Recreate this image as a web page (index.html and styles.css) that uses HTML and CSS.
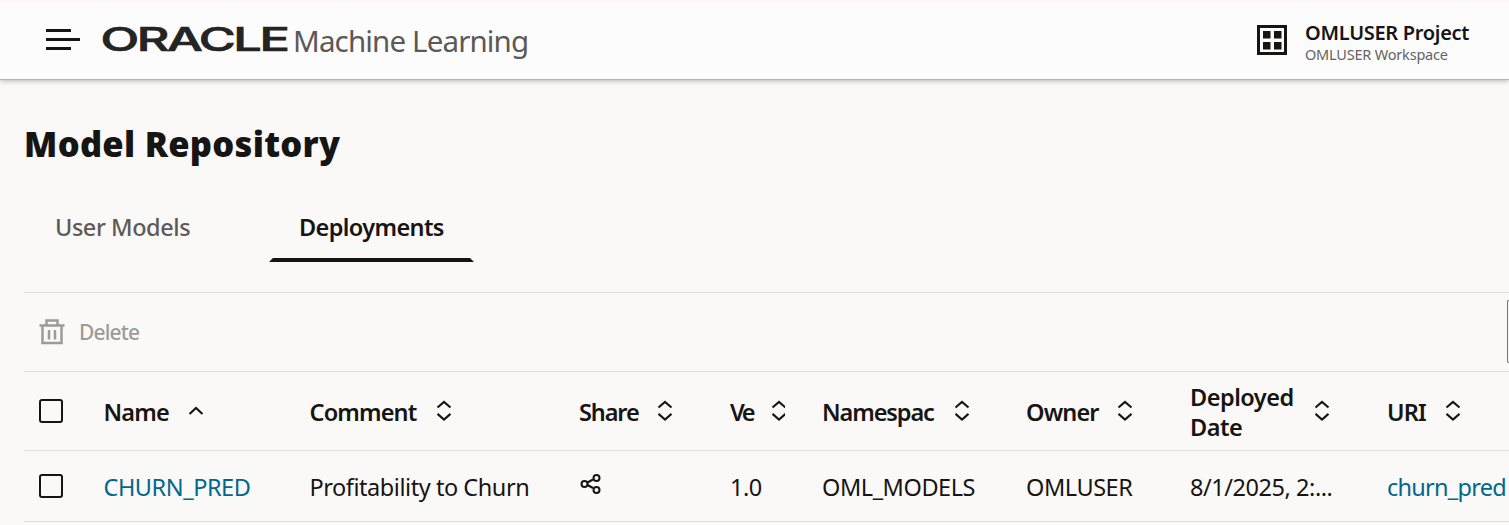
FILE: index.html
```html
<!DOCTYPE html>
<html lang="en">
<head>
<meta charset="utf-8">
<title>Model Repository</title>
<link rel="stylesheet" href="styles.css">
</head>
<body>
<svg class="defs" aria-hidden="true">
  <symbol id="sort" viewBox="0 0 16 24"><path d="M1.500 8.500 8 2.900l6.500 5.600M1.500 14.900 8 20.500l6.500-5.600"/></symbol>
  <symbol id="sort-up" viewBox="0 0 16 24"><path d="M1.500 15 8 9l6.500 6"/></symbol>
</svg>
<header class="topbar">
  <svg class="menu" viewBox="0 0 34 22"><path d="M0 1.500h25M0 10.500h34M0 19.500h25"/></svg>
  <svg class="wordmark" viewBox="0 0 186 26"><text x="-1.500" y="24.400" textLength="187" lengthAdjust="spacingAndGlyphs">ORACLE</text></svg>
  <span class="product">Machine Learning</span>
  <div class="project">
    <svg class="grid-icon" viewBox="0 0 30 30"><path class="frame" d="M1.500 1.500h27v27h-27z"/><path d="M6 6h7.500v7.500H6zM17 6h7.500v7.500H17zM6 17h7.500v7.500H6zM17 17h7.500v7.500H17z"/></svg>
    <div class="project-text">
      <div class="project-name">OMLUSER Project</div>
      <div class="workspace">OMLUSER Workspace</div>
    </div>
  </div>
</header>
<main>
  <h1>Model Repository</h1>
  <nav class="tabs">
    <a class="tab tab-models"><span>User Models</span></a>
    <a class="tab tab-deploy active"><span>Deployments</span></a>
  </nav>
  <section class="panel">
    <div class="toolbar">
      <button class="delete" disabled>
        <svg class="trash" viewBox="0 0 26 26"><path d="M0.500 6.500h25M3.500 6.500v17.500h19V6.500M7.500 6V1.500h11V6M10 11v9.500M16 11v9.500"/></svg>
        <span>Delete</span>
      </button>
      <div class="search"></div>
    </div>
    <div class="row head">
      <div class="check"><i class="box"></i></div>
      <div class="th name"><span>Name</span><svg><use href="#sort-up"/></svg></div>
      <div class="th comment"><span>Comment</span><svg><use href="#sort"/></svg></div>
      <div class="th shared"><span>Share</span><svg><use href="#sort"/></svg></div>
      <div class="th version"><span>Ve</span><svg><use href="#sort"/></svg></div>
      <div class="th namespace"><span>Namespac</span><svg><use href="#sort"/></svg></div>
      <div class="th owner"><span>Owner</span><svg><use href="#sort"/></svg></div>
      <div class="th date"><span>Deployed<br>Date</span><svg><use href="#sort"/></svg></div>
      <div class="th uri"><span>URI</span><svg><use href="#sort"/></svg></div>
    </div>
    <div class="row body">
      <div class="check"><i class="box"></i></div>
      <a class="link cell">CHURN_PRED</a>
      <div class="cell">Profitability to Churn</div>
      <div><svg class="share" viewBox="0 0 22 20"><path d="m7.500 8.500 5.500-3M7.500 11l5.500 3"/><circle cx="4.500" cy="10" r="3"/><circle cx="16.500" cy="4" r="3"/><circle cx="16.500" cy="16" r="3"/></svg></div>
      <div class="cell">1.0</div>
      <div class="cell">OML_MODELS</div>
      <div class="cell">OMLUSER</div>
      <div class="cell">8/1/2025, 2:...</div>
      <a class="link cell endpoint">churn_pred</a>
    </div>
  </section>
</main>
</body>
</html>
```
FILE: styles.css
```css
* { box-sizing: border-box; }
body {
  margin: 0;
  width: 1509px;
  height: 525px;
  overflow: hidden;
  background: #faf9f7;
  color: #161513;
  font: 23.5px/30px "Noto Sans", "Open Sans", sans-serif;
  letter-spacing: -.45px;
  white-space: nowrap;
}
svg { flex: none; fill: none; stroke: #161513; }
.defs { display: block; width: 0; height: 0; }
.topbar {
  display: flex;
  height: 80px;
  padding-left: 46px;
  background: #fcfcfc;
  border-top: 1px solid #fcf6f3;
  border-bottom: 1px solid #b0b2bc;
  box-shadow: 0 1px 5px rgba(0, 0, 0, .28);
}
.menu { width: 34px; height: 22px; margin-top: 28px; stroke-width: 3; }
.wordmark { width: 186px; height: 26px; margin: 26px 0 0 22px; overflow: visible; }
.wordmark text { font: 500 32px Inter, sans-serif; letter-spacing: -1.5px; fill: #242424; stroke: #242424; stroke-width: .7px; }
.product { margin: 20px 0 0 5px; font-size: 29.5px; line-height: 40px; letter-spacing: -.85px; color: #5b5956; }
.project { display: flex; width: 252px; margin-left: auto; }
.grid-icon { width: 30px; height: 30px; margin-top: 24px; fill: #161513; stroke: none; }
.grid-icon .frame { fill: none; stroke: #161513; stroke-width: 3; }
.project-text { margin: 19px 0 0 18px; }
.project-name { font-size: 20px; font-weight: 600; line-height: 25px; letter-spacing: -.3px; }
.workspace { font-size: 14.500px; line-height: 18px; letter-spacing: -.2px; color: #66635f; }
main { padding: 44px 0 0 24px; }
h1 { margin: 0; font-size: 34.500px; font-weight: 900; line-height: 40px; letter-spacing: .28px; }
.tabs { display: flex; gap: 48px; margin-top: 37px; height: 61px; }
.tab { display: flex; flex-direction: column; height: 61px; padding: 11px 31px 0; color: #5e5b57; font-weight: 500; }
.tab-models { width: 197px; }
.tab-deploy { width: 205px; letter-spacing: -.62px; }
.tab.active { padding: 11px 30px 0; color: #161513; font-weight: 600; }
.tab.active::after {
  content: "";
  height: 4px;
  margin: 16px -30px 0;
  background: #161513;
  clip-path: polygon(4px 0, calc(100% - 4px) 0, 100% 100%, 0 100%);
}
.panel { margin-top: 30px; border-top: 1px solid #dfdedb; }
.toolbar { display: flex; justify-content: space-between; height: 79px; border-bottom: 1px solid #dfdedb; }
.delete {
  display: flex;
  align-items: center;
  gap: 14px;
  height: 78px;
  padding: 0 0 0 15px;
  border: 0;
  background: none;
  color: #9d9b98;
  font: 500 21px/30px "Noto Sans", sans-serif;
  letter-spacing: -.85px;
}
.trash { width: 26px; height: 26px; stroke: #9d9b98; stroke-width: 2.500; }
.search { width: 2px; height: 63px; margin-top: 7px; border: 1px solid #777571; border-right: 0; border-radius: 4px 0 0 4px; }
.row {
  display: grid;
  grid-template-columns: 79.5px 206px 269.5px 151px 92px 204px 164px 197px 122px;
  align-items: center;
  border-bottom: 1px solid #dfdedb;
}
.head { height: 79px; font-weight: 600; letter-spacing: -.85px; }
.body { height: 71px; }
.cell { padding-top: 2px; }
.endpoint { letter-spacing: -.75px; }
.check { padding-left: 15px; }
.box { display: block; width: 24px; height: 24px; border: 2px solid #161513; border-radius: 3px; }
.th { display: flex; align-items: center; gap: 18px; }
.th span { flex: none; padding-top: 2px; }
.th svg { width: 16px; height: 24px; stroke-width: 2.1; }
.name span { width: 66px; }
.comment span { width: 108px; }
.shared span { width: 60px; letter-spacing: -1.1px; }
.version { width: 55px; overflow: hidden; }
.version span { width: 23px; letter-spacing: -2.5px; }
.namespace span { width: 114px; letter-spacing: -1.1px; }
.owner span { width: 73px; }
.date span { width: 106px; letter-spacing: -.5px; }
.uri span { width: 40px; }
.link { color: #00688c; }
.share { display: block; width: 22px; height: 20px; margin: -4px 0 0 1px; stroke-width: 2; }
```
